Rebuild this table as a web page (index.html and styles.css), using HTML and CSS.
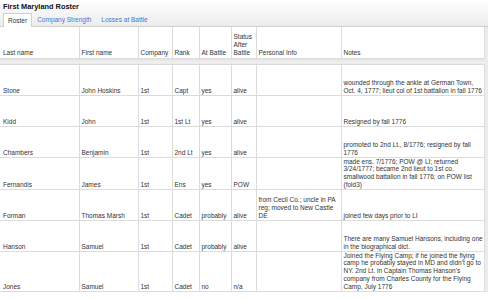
FILE: index.html
```html
<!DOCTYPE html>
<html lang="en">
<head>
  <meta charset="UTF-8" />
  <title>First Maryland Roster</title>
  <link rel="stylesheet" href="styles.css">
</head>
<body>
  <div class="top">
    <div class="title">First Maryland Roster</div>
    <div class="tabs">
      <span class="tab active">Roster</span>
      <span class="tab">Company Strength</span>
      <span class="tab">Losses at Battle</span>
    </div>
  </div>

  <div class="sheet">
    <table class="roster">
      <colgroup>
        <col class="c-last">
        <col class="c-first">
        <col class="c-company">
        <col class="c-rank">
        <col class="c-battle">
        <col class="c-status">
        <col class="c-info">
        <col class="c-notes">
      </colgroup>
      <thead>
        <tr>
          <th>Last name</th>
          <th>First name</th>
          <th>Company</th>
          <th>Rank</th>
          <th>At Battle</th>
          <th>Status After Battle</th>
          <th>Personal Info</th>
          <th>Notes</th>
        </tr>
        <tr class="band"><td colspan="8"></td></tr>
      </thead>
      <tbody>
        <tr>
          <td>Stone</td><td>John Hoskins</td><td>1st</td><td>Capt</td><td>yes</td><td>alive</td><td></td>
          <td class="text">wounded through the ankle at German Town,<br>Oct. 4, 1777; lieut col of 1st battalion in fall 1776</td>
        </tr>
        <tr>
          <td>Kidd</td><td>John</td><td>1st</td><td>1st Lt</td><td>yes</td><td>alive</td><td></td>
          <td class="text">Resigned by fall 1776</td>
        </tr>
        <tr>
          <td>Chambers</td><td>Benjamin</td><td>1st</td><td>2nd Lt</td><td>yes</td><td>alive</td><td></td>
          <td class="text">promoted to 2nd Lt., 8/1776; resigned by fall<br>1776</td>
        </tr>
        <tr>
          <td>Fernandis</td><td>James</td><td>1st</td><td>Ens</td><td>yes</td><td>POW</td><td></td>
          <td class="text">made ens. 7/1776; POW @ LI; returned<br>3/24/1777; became 2nd lieut to 1st co.<br>smallwood battalion in fall 1776; on POW list<br>(fold3)</td>
        </tr>
        <tr>
          <td>Forman</td><td>Thomas Marsh</td><td>1st</td><td>Cadet</td><td>probably</td><td>alive</td>
          <td class="text">from Cecil Co.; uncle in PA<br>reg; moved to New Castle<br>DE</td>
          <td class="text">joined few days prior to LI</td>
        </tr>
        <tr>
          <td>Hanson</td><td>Samuel</td><td>1st</td><td>Cadet</td><td>probably</td><td>alive</td><td></td>
          <td class="text">There are many Samuel Hansons, including one<br>in the biographical dict.</td>
        </tr>
        <tr>
          <td>Jones</td><td>Samuel</td><td>1st</td><td>Cadet</td><td>no</td><td>n/a</td><td></td>
          <td class="text">Joined the Flying Camp; if he joined the flying<br>camp he probably stayed in MD and didn't go to<br>NY. 2nd Lt. in Captain Thomas Hanson's<br>company from Charles County for the Flying<br>Camp, July 1776</td>
        </tr>
      </tbody>
    </table>
  </div>
</body>
</html>
```

FILE: styles.css
```css
* {
  margin: 0;
  padding: 0;
  box-sizing: border-box;
}
body {
  font-family: "Liberation Sans", Arial, sans-serif;
  font-size: 6.5px;
  line-height: 7.8px;
  color: #333;
  background: #fff;
  width: 488px;
  overflow: hidden;
}
.top {
  background: linear-gradient(#fff, #ececec);
  border-bottom: 1px solid #cfcfcf;
  padding: 2px 0 0 3px;
}
.title {
  font-size: 7.4px;
  font-weight: bold;
  color: #111;
  line-height: 10px;
}
.tabs {
  display: flex;
  align-items: flex-end;
  margin-top: 1px;
  height: 13px;
}
.tab {
  color: #3b7ad6;
  padding: 0 5px;
  line-height: 12px;
}
.tab.active {
  color: #333;
  background: #fff;
  border: 1px solid #cfcfcf;
  border-bottom: none;
  height: 14px;
  margin-bottom: -1px;
  padding: 0 4px;
  line-height: 13px;
}
.sheet {
  width: 488px;
  border-right: 4px solid #ececec;
}
.roster {
  width: 484px;
  table-layout: fixed;
  border-collapse: collapse;
}
.c-last { width: 79px; }
.c-first { width: 59px; }
.c-company { width: 34px; }
.c-rank { width: 27px; }
.c-battle { width: 32px; }
.c-status { width: 25px; }
.c-info { width: 85px; }
.c-notes { width: 143px; }
.roster th,
.roster td {
  border-right: 1px solid #dcdcdc;
  border-bottom: 1px solid #dcdcdc;
  padding: 0 1px 0 2px;
  vertical-align: bottom;
  text-align: left;
  font-weight: normal;
  overflow: hidden;
}
.roster th:first-child,
.roster td:first-child {
  padding-left: 3px;
}
.roster th {
  height: 31px;
  padding-bottom: 1px;
}
.roster td {
  height: 31px;
}
.roster td.text {
  white-space: nowrap;
  padding-right: 0;
}
.roster .band td {
  height: 6px;
  padding: 0;
  background: linear-gradient(#e2e2e2, #f3f3f3);
  border-right: none;
}
```
